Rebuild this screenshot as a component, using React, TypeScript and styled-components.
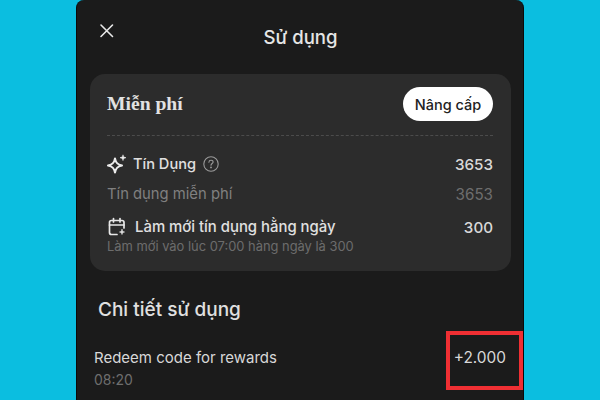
import React from "react";
import styled, { createGlobalStyle } from "styled-components";

const Global = createGlobalStyle`
  html, body { margin: 0; padding: 0; height: 100%; }
  body { background: #0bbee0; font-family: Inter, "Noto Sans", sans-serif; overflow: hidden; }
`;

const Page = styled.div`
  width: 600px;
  height: 400px;
  background: #0bbee0;
  display: flex;
  justify-content: center;
  overflow: hidden;
  position: relative;
`;

const Phone = styled.div`
  width: 448px;
  height: 400px;
  box-sizing: border-box;
  background: #1b1b1b;
  border-left: 1px solid #0a0a0a;
  border-right: 1px solid #0a0a0a;
  border-radius: 8px 8px 0 0;
  padding: 0 12px 0 13px;
  display: flex;
  flex-direction: column;
  overflow: hidden;
`;

const Header = styled.header`
  height: 74px;
  flex: none;
  position: relative;
  display: flex;
  justify-content: center;
  padding-top: 25px;
  box-sizing: border-box;
`;

const CloseButton = styled.div`
  position: absolute;
  left: 9px;
  top: 23px;
  width: 16px;
  height: 16px;
  color: #e8e8e8;
`;

const Title = styled.h1`
  margin: 0;
  font-size: 18.6px;
  line-height: 24px;
  font-weight: 500;
  color: #e6e6e6;
`;

const Card = styled.section`
  flex: none;
  height: 197px;
  box-sizing: border-box;
  background: #2c2c2c;
  border-radius: 15px;
  padding: 13px 18px 0 17px;
`;

const PlanRow = styled.div`
  display: flex;
  justify-content: space-between;
  align-items: center;
  height: 34px;
  padding-bottom: 14px;
  border-bottom: 1px dashed #4c4c4c;
`;

const PlanName = styled.div`
  font-family: "Liberation Serif", serif;
  font-weight: 700;
  font-size: 19.6px;
  color: #e2e2e2;
`;

const Upgrade = styled.div`
  width: 90px;
  height: 34px;
  border-radius: 17px;
  background: #fff;
  color: #222;
  font-size: 14.5px;
  font-weight: 500;
  display: flex;
  align-items: center;
  justify-content: center;
`;

const Row = styled.div<{ $h: number; $top?: number }>`
  display: flex;
  justify-content: space-between;
  align-items: center;
  height: ${(p) => p.$h}px;
  margin-top: ${(p) => p.$top ?? 0}px;
`;

const Label = styled.div<{ $gap: number; $size: number }>`
  display: flex;
  align-items: center;
  gap: ${(p) => p.$gap}px;
  font-size: ${(p) => p.$size}px;
  font-weight: 500;
  color: #e0e0e0;
`;

const MutedLabel = styled.div`
  font-size: 14.8px;
  color: #808080;
`;

const Value = styled.div<{ $muted?: boolean }>`
  font-size: 15.2px;
  font-weight: ${(p) => (p.$muted ? 400 : 500)};
  color: ${(p) => (p.$muted ? "#6e6e6e" : "#d8d8d8")};
`;

const HelpIcon = styled.span`
  display: flex;
  color: #9a9a9a;
  margin-left: 1px;
`;

const Note = styled.div`
  font-size: 12.9px;
  line-height: 14px;
  color: #6c6c6c;
`;

const SectionTitle = styled.h2`
  margin: 26px 0 0 8px;
  font-size: 19px;
  line-height: 26px;
  font-weight: 500;
  color: #e0e0e0;
`;

const UsageRow = styled.div`
  margin: 26px 5px 0 4px;
  display: flex;
  justify-content: space-between;
  align-items: flex-start;
`;

const UsageInfo = styled.div`
  display: flex;
  flex-direction: column;
  gap: 4px;
`;

const UsageName = styled.div`
  font-size: 15px;
  line-height: 18px;
  color: #d8d8d8;
`;

const UsageTime = styled.div`
  font-size: 14px;
  line-height: 18px;
  color: #6e6e6e;
`;

const Amount = styled.div`
  font-size: 15.4px;
  line-height: 18px;
  color: #d8d8d8;
`;

const Highlight = styled.div`
  position: absolute;
  left: 446px;
  top: 331px;
  width: 77px;
  height: 59px;
  box-sizing: border-box;
  border: 4px solid #ef2f33;
`;

export default function App() {
  return (
    <Page>
      <Global />
      <Phone>
        <Header>
          <CloseButton>
            <svg width="16" height="16" viewBox="0 0 16 16" fill="none" stroke="currentColor" strokeWidth="1.6" strokeLinecap="round">
              <path d="M2 2 L13.5 13.5 M13.5 2 L2 13.5" />
            </svg>
          </CloseButton>
          <Title>Sử dụng</Title>
        </Header>
        <Card>
          <PlanRow>
            <PlanName>Miễn phí</PlanName>
            <Upgrade>Nâng cấp</Upgrade>
          </PlanRow>
          <Row $h={30} $top={13}>
            <Label $gap={6} $size={14.6}>
              <svg width="20" height="20" viewBox="0 0 20 20" fill="none" stroke="#ececec" strokeWidth="2" strokeLinejoin="round">
                <path d="M8 4.5 C8.8 8.8 10.3 10.6 15 11.5 C10.3 12.4 8.8 14.2 8 18.5 C7.2 14.2 5.7 12.4 1 11.5 C5.7 10.6 7.2 8.8 8 4.5 Z" />
                <path d="M16 0.8 C16.2 2.6 16.9 3.3 19 3.7 C16.9 4.1 16.2 4.8 16 6.6 C15.8 4.8 15.1 4.1 13 3.7 C15.1 3.3 15.8 2.6 16 0.8 Z" fill="#ececec" strokeWidth="0.6" />
              </svg>
              Tín Dụng
              <HelpIcon>
                <svg width="16" height="16" viewBox="0 0 16 16" fill="none" stroke="currentColor" strokeWidth="1.1" strokeLinecap="round">
                  <circle cx="8" cy="8" r="7.2" />
                  <path d="M5.9 6.2 C6 4.9 7 4.3 8 4.3 C9.2 4.3 10.1 5.1 10.1 6.1 C10.1 7.5 8 7.6 8 9.2" />
                  <circle cx="8" cy="11.4" r="0.4" />
                </svg>
              </HelpIcon>
            </Label>
            <Value>3653</Value>
          </Row>
          <Row $h={30}>
            <MutedLabel>Tín dụng miễn phí</MutedLabel>
            <Value $muted>3653</Value>
          </Row>
          <Row $h={26} $top={5}>
            <Label $gap={8} $size={14.9}>
              <svg width="20" height="20" viewBox="0 0 20 20" fill="none" stroke="#e8e8e8" strokeWidth="1.7" strokeLinecap="round" strokeLinejoin="round">
                <path d="M10 17.5 H4.5 C3.4 17.5 2.5 16.6 2.5 15.5 V5.5 C2.5 4.4 3.4 3.5 4.5 3.5 H15 C16.1 3.5 17 4.4 17 5.5 V11" />
                <path d="M2.5 8 H17 M6.5 1.5 V5 M13 1.5 V5" />
                <path d="M15 12.5 C15.2 14.2 15.8 14.8 17.5 15 C15.8 15.2 15.2 15.8 15 17.5 C14.8 15.8 14.2 15.2 12.5 15 C14.2 14.8 14.8 14.2 15 12.5 Z" fill="#e8e8e8" strokeWidth="0.7" />
              </svg>
              Làm mới tín dụng hằng ngày
            </Label>
            <Value>300</Value>
          </Row>
          <Note>Làm mới vào lúc 07:00 hàng ngày là 300</Note>
        </Card>
        <SectionTitle>Chi tiết sử dụng</SectionTitle>
        <UsageRow>
          <UsageInfo>
            <UsageName>Redeem code for rewards</UsageName>
            <UsageTime>08:20</UsageTime>
          </UsageInfo>
          <Amount>+2.000</Amount>
        </UsageRow>
      </Phone>
      <Highlight />
    </Page>
  );
}
